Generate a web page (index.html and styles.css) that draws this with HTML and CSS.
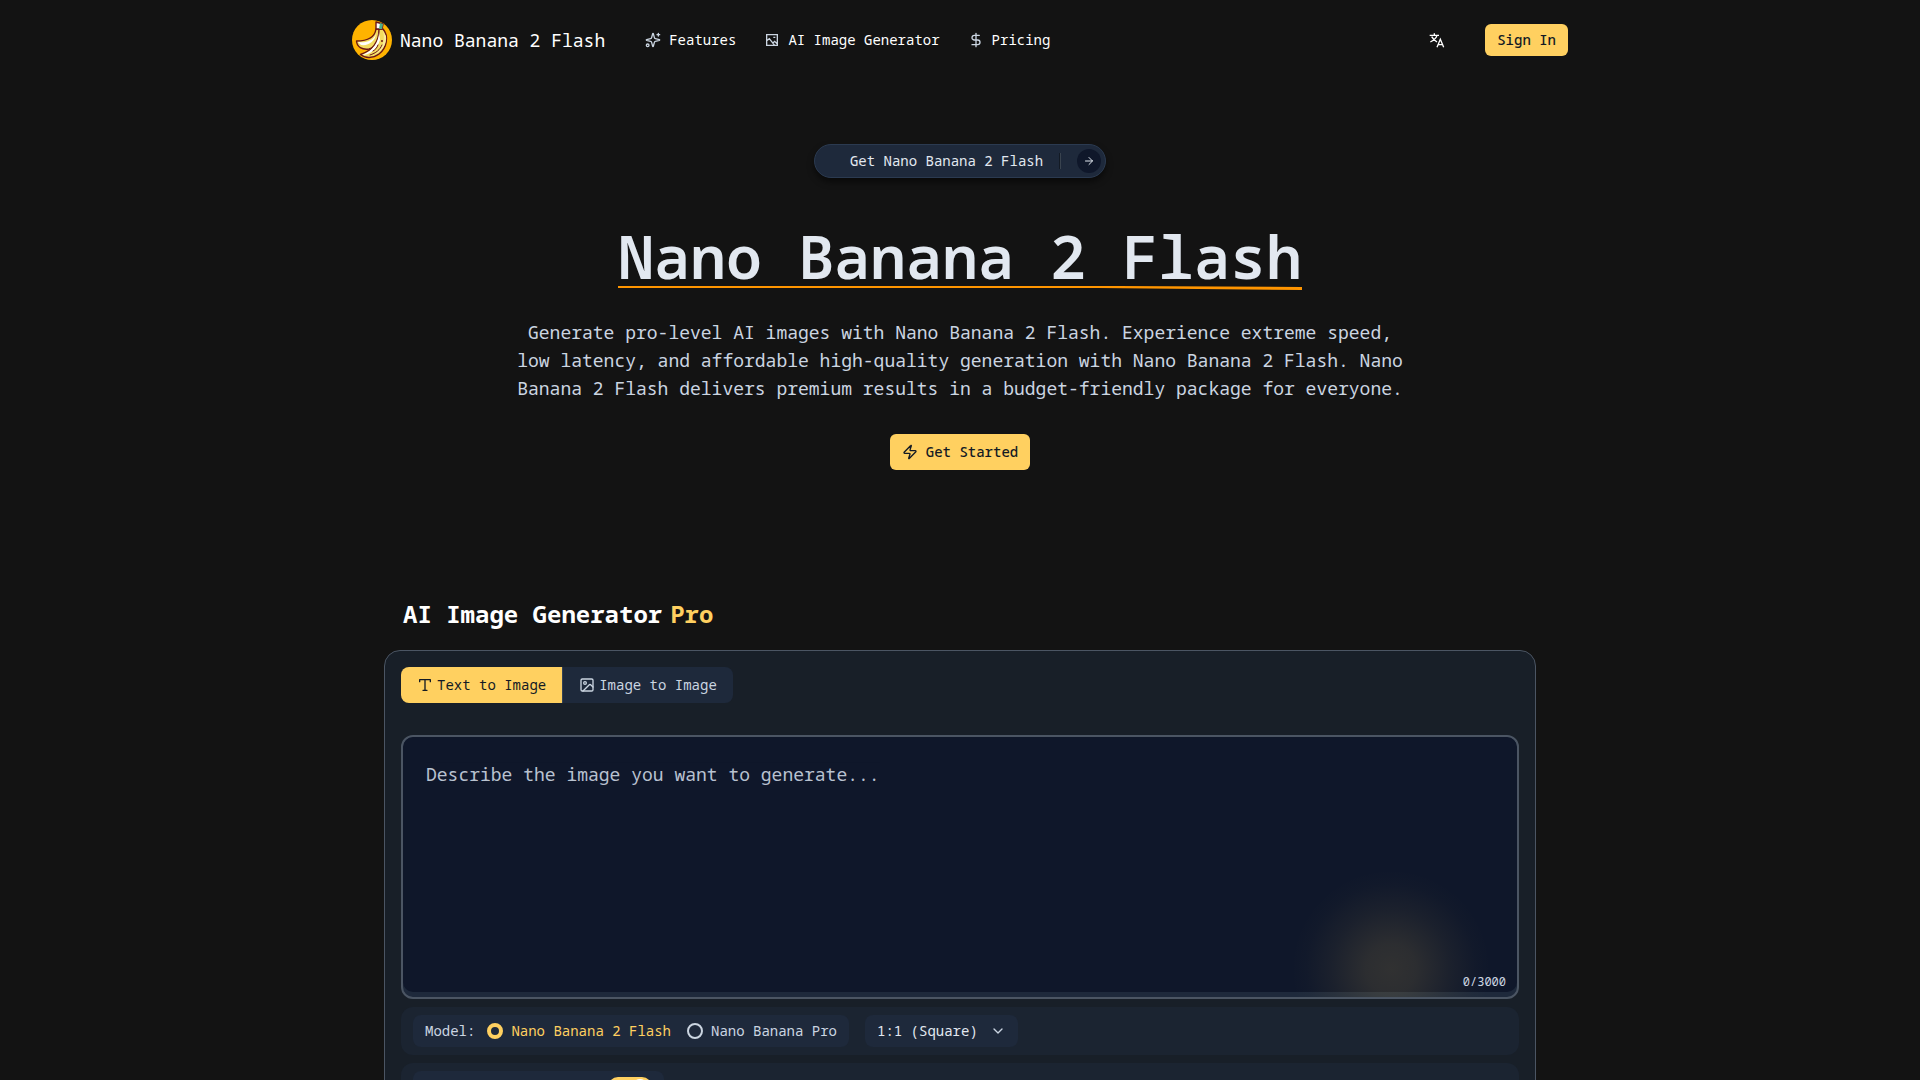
FILE: index.html
```
<!DOCTYPE html>
<html lang="en">
<head>
  <meta charset="UTF-8">
  <meta name="viewport" content="width=device-width, initial-scale=1.0">
  <title>Nano Banana 2 Flash</title>
  <link rel="stylesheet" href="styles.css">
</head>
<body>
  <header class="header">
    <a class="brand" href="#">
      <svg class="brand-logo" viewBox="0 0 40 40" aria-hidden="true">
        <circle cx="20" cy="20" r="20" fill="#ffb300"/>
        <path d="M24 9C23 16 18 21 4.500 21C5 27 10 30 17 29C25 27 28 19 28 9Z" fill="#f3dc62" stroke="#6b1616" stroke-width="1.400" stroke-linejoin="round"/>
        <path d="M6 22C14 23 21 21 24 14C23 21 17 26 9 25Z" fill="#fff"/>
        <path d="M27 9C27 20 22 30 8.500 34.500C13 38.500 21 38.500 27 34C35 28 37 16 31 9Z" fill="#f3dc62" stroke="#6b1616" stroke-width="1.400" stroke-linejoin="round"/>
        <path d="M27 12C27 22 21 31 10 35C18 35 25 29 28 20Z" fill="#fff"/>
        <path d="M31 11C33 18 32 27 23 34C31 31 35 23 34 16Z" fill="#fbec9a"/>
        <path d="M30 25C28 30 24 33 18 35M26 25C25 28 23 30 21 31" fill="none" stroke="#6b1616" stroke-width="1" stroke-linecap="round"/>
        <path d="M24 2L31 4L30 9H24Z" fill="#fff" stroke="#6b1616" stroke-width="1.400" stroke-linejoin="round"/>
        <path d="M28 3L31 4L30 9H27Z" fill="#4cae8b"/>
        <circle cx="30" cy="21" r="1" fill="#6b1616"/>
      </svg>
      <span>Nano Banana 2 Flash</span>
    </a>
    <nav class="nav">
      <a class="nav-link" href="#">
        <svg class="icon" viewBox="0 0 24 24"><path d="M9.937 15.500A2 2 0 0 0 8.500 14.063l-6.135-1.582a.5.5 0 0 1 0-.962L8.500 9.936A2 2 0 0 0 9.937 8.500l1.582-6.135a.5.5 0 0 1 .963 0L14.063 8.500A2 2 0 0 0 15.500 9.937l6.135 1.581a.5.5 0 0 1 0 .964L15.500 14.063a2 2 0 0 0-1.437 1.437l-1.582 6.135a.5.5 0 0 1-.963 0z"/><path d="M20 2v4M22 4h-4"/><circle cx="4" cy="20" r="2"/></svg>
        Features
      </a>
      <a class="nav-link" href="#">
        <svg class="icon icon-sharp" viewBox="0 0 24 24"><path d="M4 4h16v16H4zM4 13l4-3 8 10M13 17l3-3 4 4M14 8h3"/></svg>
        AI Image Generator
      </a>
      <a class="nav-link" href="#">
        <svg class="icon" viewBox="0 0 24 24"><path d="M12 2v20M17 5H9.500a3.500 3.500 0 0 0 0 7h5a3.500 3.500 0 0 1 0 7H6"/></svg>
        Pricing
      </a>
    </nav>
    <div class="header-actions">
      <button class="lang" type="button" aria-label="Language">
        <svg class="icon icon-sharp" viewBox="0 0 24 24"><path d="M1 5h14M8 2v3M12 5c-1 4-4 7-10 10M4 7c2 4 5 6 8 8M12 23l5-12 5 12M14 19h6"/></svg>
      </button>
      <button class="btn btn-small" type="button">Sign In</button>
    </div>
  </header>

  <main>
    <section class="hero">
      <a class="badge" href="#">
        <span>Get Nano Banana 2 Flash</span>
        <span class="badge-divider"></span>
        <span class="badge-arrow">
          <svg class="icon" viewBox="0 0 24 24"><path d="M5 12h14M12 5l7 7-7 7"/></svg>
        </span>
      </a>
      <h1 class="title">
        Nano Banana 2 Flash
        <svg class="title-line" viewBox="0 0 684 6" preserveAspectRatio="none" aria-hidden="true"><path d="M0 1H500L684 2V5L480 3H0Z"/></svg>
      </h1>
      <p class="lead">Generate pro-level AI images with Nano Banana 2 Flash. Experience extreme speed, low latency, and affordable high-quality generation with Nano Banana 2 Flash. Nano Banana 2 Flash delivers premium results in a budget-friendly package for everyone.</p>
      <button class="btn" type="button">
        <svg class="icon" viewBox="0 0 24 24"><path d="M4 14a1 1 0 0 1-.78-1.630l9.900-10.200a.5.5 0 0 1 .86.460l-1.920 6.020A1 1 0 0 0 13 10h7a1 1 0 0 1 .78 1.630l-9.900 10.200a.5.5 0 0 1-.86-.46l1.920-6.020A1 1 0 0 0 11 14z"/></svg>
        Get Started
      </button>
    </section>

    <section class="generator">
      <h2 class="generator-title">AI Image Generator <span class="accent">Pro</span></h2>
      <div class="panel">
        <div class="tabs">
          <button class="tab active" type="button">
            <svg class="icon" viewBox="0 0 24 24"><path d="M4 7V4h16v3M9 20h6M12 4v16"/></svg>
            Text to Image
          </button>
          <button class="tab" type="button">
            <svg class="icon" viewBox="0 0 24 24"><rect x="3" y="3" width="18" height="18" rx="2"/><circle cx="9" cy="9" r="2"/><path d="M21 15l-3.100-3.100a2 2 0 0 0-2.800 0L6 21"/></svg>
            Image to Image
          </button>
        </div>

        <div class="prompt">
          <textarea class="prompt-input" aria-label="Prompt" maxlength="3000" placeholder="Describe the image you want to generate..."></textarea>
          <span class="prompt-glow"></span>
          <span class="prompt-count">0/3000</span>
        </div>

        <div class="options">
          <div class="option model" role="radiogroup" aria-labelledby="model-label">
            <span id="model-label">Model:</span>
            <div class="model-list">
              <label class="model-item"><input type="radio" name="model" checked> <span>Nano Banana 2 Flash</span></label>
              <label class="model-item"><input type="radio" name="model"> <span>Nano Banana Pro</span></label>
            </div>
          </div>
          <div class="option ratio">
            <select class="ratio-select" aria-label="Aspect ratio">
              <option>1:1 (Square)</option>
            </select>
            <svg class="icon ratio-arrow" viewBox="0 0 24 24"><path d="M6 9l6 6 6-6"/></svg>
          </div>
        </div>

        <div class="options">
          <div class="option visibility">
            <input class="switch" type="checkbox" role="switch" aria-label="Public" checked>
          </div>
        </div>
      </div>
    </section>
  </main>
</body>
</html>
```
FILE: styles.css
```
* {
  box-sizing: border-box;
}

html {
  background: #131313;
}

body {
  margin: 0;
  height: 100vh;
  overflow: hidden;
  color: #fff;
  font-family: "Noto Sans Mono", "DejaVu Sans Mono", monospace;
  font-size: 14px;
  line-height: 20px;
}

button,
select,
textarea {
  font: inherit;
}

button {
  border: 0;
  cursor: pointer;
}

a {
  color: inherit;
  text-decoration: none;
}

.icon {
  width: 16px;
  height: 16px;
  flex: none;
  fill: none;
  stroke: currentColor;
  stroke-width: 2;
  stroke-linecap: round;
  stroke-linejoin: round;
}

.icon-sharp {
  stroke-linecap: butt;
  stroke-linejoin: miter;
}

/* header */
.header {
  display: flex;
  align-items: center;
  max-width: 1280px;
  margin: 0 auto;
  padding: 20px 32px;
}

.brand {
  display: flex;
  align-items: center;
  gap: 8px;
  font-size: 18px;
}

.brand-logo {
  width: 40px;
  height: 40px;
}

.nav {
  display: flex;
  gap: 28px;
  margin-left: 40px;
}

.nav-link {
  display: flex;
  align-items: center;
  gap: 8px;
}

.nav-link .icon {
  color: #cbd5e1;
}

.header-actions {
  display: flex;
  align-items: center;
  gap: 32px;
  margin-left: auto;
}

.lang {
  display: flex;
  padding: 8px;
  background: none;
  color: #fff;
}

.btn {
  display: inline-flex;
  align-items: center;
  gap: 8px;
  padding: 8px 12px;
  border-radius: 6px;
  background: #ffd060;
  color: #131a24;
  font-weight: 500;
}

.btn-small {
  padding: 6px 12px;
}

/* hero */
.hero {
  display: flex;
  flex-direction: column;
  align-items: center;
  padding: 64px 32px 128px;
}

.badge {
  display: flex;
  align-items: center;
  gap: 16px;
  padding: 4px 4px 4px 35px;
  border: 1px solid #2b3a50;
  border-radius: 20px;
  background: #1e293b;
  color: #e2e8f0;
  box-shadow: 0 4px 6px rgba(0, 0, 0, .5);
}

.badge-divider {
  width: 2px;
  height: 16px;
  border-left: 1px solid #131a24;
  background: #39434f;
}

.badge-arrow {
  display: flex;
  align-items: center;
  justify-content: center;
  width: 24px;
  height: 24px;
  border-radius: 50%;
  background: #0f172a;
}

.badge-arrow .icon {
  width: 12px;
  height: 12px;
}

.title {
  position: relative;
  margin: 48px 0 0;
  color: #e2e8f0;
  font-size: 60px;
  font-weight: 600;
  line-height: 60px;
}

.title-line {
  position: absolute;
  left: 0;
  bottom: -5px;
  width: 100%;
  height: 6px;
  fill: #ff9500;
}

.lead {
  max-width: 896px;
  margin: 32px 0;
  color: #cbd5e1;
  font-size: 18px;
  line-height: 28px;
  text-align: center;
}

/* generator */
.generator {
  max-width: 1216px;
  margin: 0 auto;
  padding: 0 32px;
}

.generator-title {
  display: flex;
  gap: 8px;
  margin: 0 0 20px;
  padding-left: 19px;
  font-size: 24px;
  font-weight: 700;
  line-height: 32px;
}

.accent {
  color: #ffd060;
}

.panel {
  display: flex;
  flex-direction: column;
  gap: 8px;
  padding: 16px;
  border: 1px solid #4b5563;
  border-radius: 16px;
  background: #181f28;
}

.tabs {
  display: flex;
  align-self: flex-start;
  margin-bottom: 24px;
  overflow: hidden;
  border-radius: 8px;
}

.tab {
  display: flex;
  align-items: center;
  gap: 4px;
  padding: 8px 16px;
  background: #1e293b;
  color: #cbd5e1;
}

.tab + .tab {
  border-left: 1px solid #334155;
}

.tab.active {
  background: #ffd060;
  color: #131a24;
}

.prompt {
  position: relative;
  overflow: hidden;
  padding-bottom: 5px;
  border: 2px solid #4b5563;
  border-radius: 12px;
  background: #1e293b;
}

.prompt-input {
  display: block;
  width: 100%;
  height: 255px;
  padding: 23px;
  border: 0;
  border-radius: 10px;
  outline: 0;
  resize: none;
  background: #0f172a;
  color: #e2e8f0;
  font-size: 18px;
  line-height: 28px;
}

.prompt-input::placeholder {
  color: #cbd5e1;
  opacity: .9;
}

.prompt-glow {
  position: absolute;
  right: 26px;
  bottom: -72px;
  width: 200px;
  height: 200px;
  background: radial-gradient(closest-side, rgba(255, 208, 96, .14), rgba(255, 208, 96, .12) 25%, rgba(255, 208, 96, .05) 60%, rgba(255, 208, 96, .01) 85%, transparent);
  pointer-events: none;
}

.prompt-count {
  position: absolute;
  right: 11px;
  bottom: 7px;
  color: #cbd5e1;
  font-size: 12px;
  line-height: 16px;
}

.options {
  display: flex;
  gap: 16px;
  padding: 8px 12px;
  border-radius: 12px;
  background: #1b2431;
}

.option {
  display: flex;
  align-items: center;
  gap: 12px;
  height: 32px;
  padding: 0 12px;
  border-radius: 8px;
  background: #1e293b;
  color: #cbd5e1;
}

.model-list {
  display: flex;
  gap: 16px;
}

.model-item {
  display: flex;
  align-items: center;
  gap: 8px;
}

.model-item input {
  appearance: none;
  width: 16px;
  height: 16px;
  margin: 0;
  border: 2px solid #cbd5e1;
  border-radius: 50%;
}

.model-item input:checked {
  border: 4px solid #ffd060;
}

.model-item input:checked + span {
  color: #ffd060;
}

.ratio {
  position: relative;
  padding: 0;
}

.ratio-select {
  appearance: none;
  height: 32px;
  padding: 0 40px 0 12px;
  border: 0;
  background: none;
  color: #e2e8f0;
}

.ratio-arrow {
  position: absolute;
  right: 12px;
  pointer-events: none;
}

.visibility {
  justify-content: flex-end;
  width: 251px;
}

.switch {
  appearance: none;
  display: flex;
  width: 44px;
  height: 20px;
  margin: 0;
  padding: 2px 4px;
  border-radius: 10px;
  background: #ffd060;
}

.switch::before {
  content: "";
  width: 16px;
  height: 16px;
  margin-left: auto;
  border-radius: 50%;
  background: #fff;
}
```
